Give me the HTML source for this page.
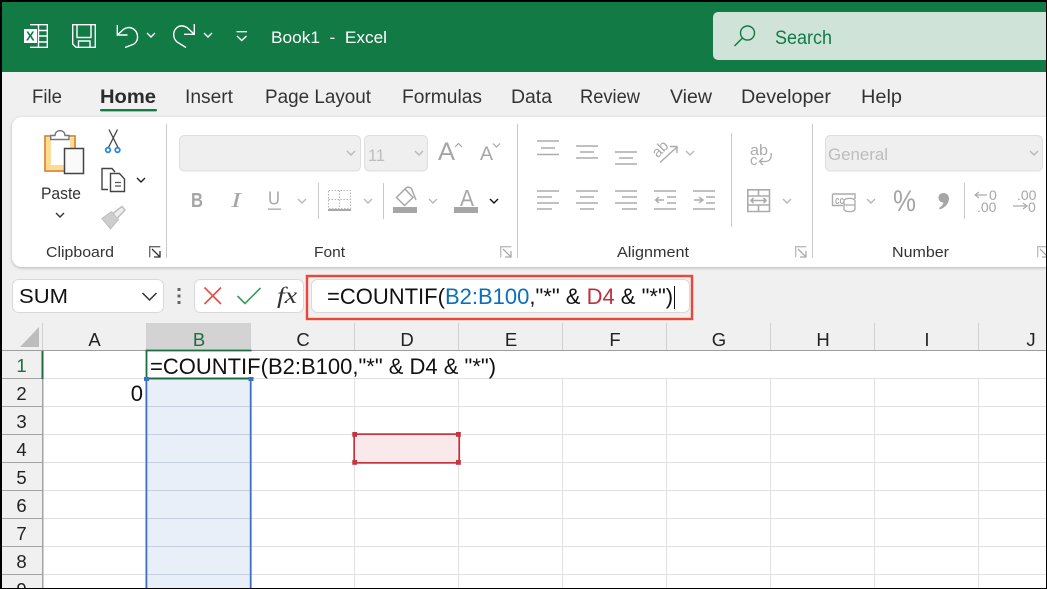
<!DOCTYPE html>
<html><head><meta charset="utf-8"><style>
html,body{margin:0;padding:0;background:#000;overflow:hidden}
svg{display:block;position:absolute;left:0;top:0}
text{font-family:"Liberation Sans",sans-serif;white-space:pre}
</style></head><body>
<svg width="1047" height="589" viewBox="0 0 1047 589" xmlns="http://www.w3.org/2000/svg">
<defs>
<filter id="sh" x="-5%" y="-10%" width="110%" height="120%"><feDropShadow dx="0" dy="1" stdDeviation="1.5" flood-color="#000" flood-opacity=".25"/></filter>
<path id="ch" d="M-4 -2 L0 2 L4 -2" fill="none" stroke-width="1.4"/>
<g id="lau" fill="none" stroke-width="1.3"><path d="M0.7 11.3V0.7H11.3" stroke="#666"/><path d="M3 3L10.5 10.5M5 11H11V5" stroke="#333"/></g>
<g id="laug" fill="none" stroke-width="1.3"><path d="M0.7 11.3V0.7H11.3" stroke="#bbb"/><path d="M3 3L10.5 10.5M5 11H11V5" stroke="#aaa"/></g>
</defs>
<rect width="1047" height="589" fill="#000"/>
<rect x="2" y="2" width="1044" height="586" fill="#f0f0f0"/>
<rect x="2" y="2" width="1044" height="70" fill="#117a45"/>

<!-- title icons -->
<g fill="none" stroke="#fff" stroke-width="1.4">
<path d="M30 24.7H47.3V47.3H30M38.5 24.7V47.3M38 30.500H47.3M38 36H47.3M38 42H47.3"/>
<rect x="24" y="29" width="13" height="14" fill="#fff" stroke="none"/>
<path d="M72.7 24.7H95.3V47.3H76L72.7 44ZM77 25V37.500H91V25M78.500 47V41H90V47"/>
<path d="M117.300 25V35H127.500"/>
<path d="M117.300 35L124 29C131 25 138 30 137.500 38C137.300 41 136 42.500 134 44L125 47.500"/>
<path d="M194.300 24V34.300H184"/>
<path d="M194.300 34.300L187 27.500C179 23 173 29 173.800 36C174 39 175.500 40.500 177 42L186 47.500"/>
<path d="M236.5 31.7H247" stroke-width="1.3"/>
<path d="M237 36L241.7 40.5L246.5 36" stroke-width="1.4"/>
</g>
<text x="26" y="40.500" font-size="13" font-weight="bold" fill="#117a45" textLength="8.500" lengthAdjust="spacingAndGlyphs">X</text>
<use href="#ch" x="151" y="35" stroke="#fff"/>
<use href="#ch" x="208" y="35" stroke="#fff"/>
<text x="271" y="43" font-size="17" fill="#fff" textLength="116" lengthAdjust="spacingAndGlyphs">Book1  -  Excel</text>

<!-- search -->
<rect x="713" y="12" width="340" height="48" rx="5" fill="#cfe3d8"/>
<circle cx="747.5" cy="33" r="7" fill="none" stroke="#117a45" stroke-width="1.4"/>
<path d="M742.5 38L734.5 46" stroke="#117a45" stroke-width="1.5" fill="none"/>
<text x="775" y="44" font-size="19" fill="#117a45" textLength="57" lengthAdjust="spacingAndGlyphs">Search</text>

<!-- tabs -->
<g font-size="19.5" fill="#333">
<text x="32" y="103" textLength="30" lengthAdjust="spacingAndGlyphs">File</text>
<text x="100" y="103" font-weight="bold" fill="#2c2c2c" textLength="56" lengthAdjust="spacingAndGlyphs">Home</text>
<text x="185" y="103" textLength="48" lengthAdjust="spacingAndGlyphs">Insert</text>
<text x="265" y="103" textLength="106" lengthAdjust="spacingAndGlyphs">Page Layout</text>
<text x="402" y="103" textLength="80" lengthAdjust="spacingAndGlyphs">Formulas</text>
<text x="511" y="103" textLength="41" lengthAdjust="spacingAndGlyphs">Data</text>
<text x="580" y="103" textLength="60" lengthAdjust="spacingAndGlyphs">Review</text>
<text x="670" y="103" textLength="42" lengthAdjust="spacingAndGlyphs">View</text>
<text x="741" y="103" textLength="90" lengthAdjust="spacingAndGlyphs">Developer</text>
<text x="861" y="103" textLength="41" lengthAdjust="spacingAndGlyphs">Help</text>
</g>
<rect x="100" y="109" width="57" height="2.4" rx="1.2" fill="#117a45"/>

<!-- ribbon -->
<rect x="12" y="117" width="1050" height="150" rx="10" fill="#fff" filter="url(#sh)"/>
<g fill="#c9c9c9"><rect x="166" y="124" width="1" height="134"/><rect x="517" y="124" width="1" height="134"/><rect x="812" y="124" width="1" height="134"/><rect x="731" y="133" width="1" height="94"/><rect x="318" y="183" width="1" height="36"/><rect x="383" y="183" width="1" height="36"/><rect x="964" y="183" width="1" height="36"/></g>

<!-- paste -->
<rect x="45" y="136" width="30" height="35" fill="#fff" stroke="#dd7a1c" stroke-width="1.6"/>
<path d="M46 165H64V170H46ZM46 137H51V165H46ZM70 138H74V148H70Z" fill="#fbdc95"/>
<path d="M50.7 139.5V135.5H55C55 129 65 129 65 135.5H69V139.5Z" fill="#fff" stroke="#777" stroke-width="1.4"/>
<rect x="64.5" y="148.5" width="19" height="25" fill="#fafafa" stroke="#444" stroke-width="1.5"/>
<text x="41" y="199" font-size="17" fill="#333" textLength="40" lengthAdjust="spacingAndGlyphs">Paste</text>
<use href="#ch" x="60" y="215" stroke="#333"/>
<path d="M109 129.500L118 147.500M117.500 129.500L108.500 147.500" stroke="#444" stroke-width="1.300" fill="none"/>
<circle cx="108" cy="150" r="2.300" fill="none" stroke="#2b88d8" stroke-width="1.800"/>
<circle cx="117.500" cy="150" r="2.300" fill="none" stroke="#2b88d8" stroke-width="1.800"/>
<path d="M108 189.500H102V168.500H112L115 172" fill="none" stroke="#444" stroke-width="1.400"/>
<path d="M110.500 191.500V173.500H119.500L124.500 179V191.500Z" fill="#fff" stroke="#444" stroke-width="1.400"/>
<path d="M115 182.500H121M115 186H121" stroke="#555" stroke-width="1.200"/>
<use href="#ch" x="141" y="180" stroke="#222"/>
<path d="M102 218.500L111.500 211.500L118.500 219.500L110.500 229Z" fill="#cdcdcd" stroke="#bdbdbd"/>
<path d="M113.500 213L122 206.500L125 210L117.500 218" fill="#eee" stroke="#bdbdbd" stroke-width="1.500"/>
<text x="46" y="257" font-size="15" fill="#333" textLength="68" lengthAdjust="spacingAndGlyphs">Clipboard</text>
<use href="#lau" x="149" y="246"/>

<!-- font group -->
<g fill="#efefef" stroke="#dedede"><rect x="179.500" y="135.500" width="181" height="35.500" rx="5"/><rect x="364.500" y="135.500" width="63" height="35.500" rx="5"/><rect x="825.500" y="135.500" width="217" height="35.500" rx="5"/></g>
<g stroke="#b8b8b8">
<use href="#ch" x="351" y="153"/><use href="#ch" x="419" y="153"/><use href="#ch" x="302" y="201"/><use href="#ch" x="368" y="201"/><use href="#ch" x="433" y="201"/><use href="#ch" x="690" y="153"/><use href="#ch" x="787" y="201"/><use href="#ch" x="871" y="201"/><use href="#ch" x="1034" y="153"/>
</g>
<use href="#ch" x="494" y="201" stroke="#111"/>
<text x="368" y="161" font-size="17" fill="#bdbdbd" textLength="17" lengthAdjust="spacingAndGlyphs">11</text>
<text x="828" y="160" font-size="17" fill="#bdbdbd" textLength="60" lengthAdjust="spacingAndGlyphs">General</text>
<g fill="#a6a6a6">
<text x="438" y="160" font-size="25" textLength="17" lengthAdjust="spacingAndGlyphs">A</text>
<text x="480" y="160" font-size="19" textLength="13" lengthAdjust="spacingAndGlyphs">A</text>
<text x="191" y="207" font-size="20" font-weight="bold" textLength="12" lengthAdjust="spacingAndGlyphs">B</text>
<text x="231" y="207" font-size="21" font-style="italic" textLength="10" lengthAdjust="spacingAndGlyphs" style="font-family:'Liberation Serif',serif">I</text>
<text x="268" y="204.500" font-size="18" textLength="12" lengthAdjust="spacingAndGlyphs">U</text>
<text x="460" y="206" font-size="23" textLength="14" lengthAdjust="spacingAndGlyphs">A</text>
<rect x="268" y="208.500" width="13" height="1.300"/>
<rect x="393" y="207" width="24" height="6"/>
<rect x="454" y="207" width="24" height="6"/>
</g>
<path d="M455 147L458.500 143.500L462 147M493 143.500L496.500 147L500 143.500" fill="none" stroke="#a6a6a6" stroke-width="1.200"/>
<path d="M328.500 190.500H350.500V208.500H328.500ZM339.500 190.500V208.500M328.500 199.500H350.500" fill="none" stroke="#b8b8b8" stroke-width="1.100" stroke-dasharray="1.500 1.500"/>
<rect x="328" y="209" width="23" height="2" fill="#a8a8a8"/>
<path d="M396.500 197.500L405 189L413 197.500L404.500 205.500Z" fill="#fff" stroke="#a8a8a8" stroke-width="1.500"/>
<path d="M405 189C407 186 411 187 412 190M412 190L416 200" fill="none" stroke="#a8a8a8" stroke-width="1.500"/>
<text x="314" y="257" font-size="15" fill="#333" textLength="31" lengthAdjust="spacingAndGlyphs">Font</text>
<use href="#laug" x="500" y="246"/>

<!-- alignment -->
<g stroke="#ababab" stroke-width="1.400" fill="none">
<path d="M537 141H559M541 148H555M537 154.500H559"/>
<path d="M576 146H598M580 152H594M576 158H598"/>
<path d="M615 152H637M619 158H633M615 164H637"/>
<path d="M537 191H559M537 197H552M537 203H559M537 209H552"/>
<path d="M576 191H598M580 197H594M576 203H598M580 209H594"/>
<path d="M615 191H637M622 197H637M615 203H637M622 209H637"/>
<path d="M654 191H676M667 197H676M667 203H676M654 209H676M664 200H656M659 197L655.500 200L659 203"/>
<path d="M693 191H715M706 197H715M706 203H715M693 209H715M694 200H702.500M699 197L703 200L699 203"/>
<path d="M660 162.500L677 147M670 146.500H677V153"/>
<path d="M747.800 189.800H769.500V211.500H747.800ZM747.800 196H769.500M747.800 205H769.500M758.500 189.800V196M758.500 205V211.500M751 200.500H766M753.500 198L751 200.500L753.500 203M763.500 198L766 200.500L763.500 203" stroke-width="1.600"/>
<path d="M771 153C772 159 769 161.500 765 161.500H759.500M763 158L759.500 161.500L763 165" stroke-width="1.300"/>
<path d="M832.500 194H855V199M832.500 194V205.500H843" stroke-width="1.400"/>
<path d="M844 201C844 197.500 855 197.500 855 201V209C855 212.500 844 212.500 844 209ZM844 205H855" stroke-width="1.300" fill="#fff"/>
<path d="M975 195H987M979 192L975 195L979 198M1013 206H1027M1023 203L1027 206L1023 209" stroke-width="1.200"/>
</g>
<text x="660" y="154" font-size="15" fill="#ababab" text-anchor="middle" transform="rotate(-45 660 149)">ab</text>
<text x="750" y="155" font-size="15" fill="#ababab" textLength="18" lengthAdjust="spacingAndGlyphs">ab</text>
<text x="750" y="165" font-size="15" fill="#ababab">c</text>
<text x="835" y="204" font-size="11" font-weight="bold" fill="#ababab" textLength="9" lengthAdjust="spacingAndGlyphs">cc</text>
<text x="617" y="257" font-size="15" fill="#333" textLength="72" lengthAdjust="spacingAndGlyphs">Alignment</text>
<use href="#laug" x="795" y="246"/>
<text x="892" y="257" font-size="15" fill="#333" textLength="57" lengthAdjust="spacingAndGlyphs">Number</text>
<use href="#laug" x="1037" y="246"/>
<g fill="#a6a6a6">
<text x="893" y="211" font-size="30" textLength="23" lengthAdjust="spacingAndGlyphs">%</text>
<path d="M938.500 197.500C938.500 194.500 941 193 943.500 193C947 193 949 195.500 949 198.500C949 203.500 945 207.500 940 209.500L939 208C941.500 206.500 943 204.500 943.500 202.500C940.500 202.500 938.500 200.500 938.500 197.500Z"/>
<text x="989" y="200" font-size="14">0</text>
<text x="977" y="212" font-size="14">.00</text>
<text x="1017" y="200" font-size="14">.00</text>
<text x="1028" y="212" font-size="14">0</text>
</g>

<!-- formula bar -->
<rect x="12.500" y="279.500" width="151" height="33" rx="6" fill="#fff" stroke="#d9d9d9"/>
<text x="19" y="303" font-size="20" fill="#111" textLength="49" lengthAdjust="spacingAndGlyphs">SUM</text>
<path d="M142.500 293L149.500 300L156.500 293" fill="none" stroke="#333" stroke-width="1.500"/>
<g fill="#666"><rect x="177.500" y="288" width="3" height="3"/><rect x="177.500" y="294.500" width="3" height="3"/><rect x="177.500" y="301" width="3" height="3"/></g>
<rect x="194.500" y="279.500" width="109" height="33" rx="6" fill="#fff" stroke="#d9d9d9"/>
<path d="M204.500 287.500L221 304M221 287.500L204.500 304" stroke="#e84c4c" stroke-width="1.600" fill="none"/>
<path d="M237.500 296L245 303.500L260.500 288" stroke="#3a9a5c" stroke-width="1.600" fill="none"/>
<text x="277" y="303" font-size="23" font-style="italic" style="font-family:'Liberation Serif',serif" fill="#333" textLength="20" lengthAdjust="spacingAndGlyphs">fx</text>
<rect x="311.500" y="279.500" width="378" height="33" rx="6" fill="#fff" stroke="#d9d9d9"/>
<text x="327" y="304" font-size="22" fill="#111">=COUNTIF(<tspan fill="#0b6fbd">B2:B100</tspan>,"*" &amp; <tspan fill="#c0303c">D4</tspan> &amp; "*")</text>
<rect x="674" y="286" width="1" height="23" fill="#111"/>
<rect x="307" y="276" width="385" height="43" fill="none" stroke="#ef4438" stroke-width="2.400"/>

<!-- grid -->
<rect x="43" y="351" width="1003" height="237" fill="#fff"/>
<g fill="#e1e1e1">
<rect x="146" y="378" width="900" height="1"/><rect x="43" y="378" width="103" height="1"/>
<rect x="43" y="406" width="1003" height="1"/><rect x="43" y="434" width="1003" height="1"/><rect x="43" y="462" width="1003" height="1"/><rect x="43" y="490" width="1003" height="1"/><rect x="43" y="518" width="1003" height="1"/><rect x="43" y="546" width="1003" height="1"/><rect x="43" y="574" width="1003" height="1"/>
<rect x="354" y="379" width="1" height="209"/><rect x="458" y="379" width="1" height="209"/><rect x="562" y="379" width="1" height="209"/><rect x="666" y="379" width="1" height="209"/><rect x="770" y="379" width="1" height="209"/><rect x="874" y="379" width="1" height="209"/><rect x="978" y="379" width="1" height="209"/>
</g>
<!-- col headers -->
<rect x="146" y="323" width="105" height="27" fill="#d3d3d3"/>
<path d="M39 327V347H20Z" fill="#bdbdbd"/>
<g fill="#d0d0d0"><rect x="42" y="323" width="1" height="27"/><rect x="146" y="323" width="1" height="27"/><rect x="250" y="323" width="1" height="27"/><rect x="354" y="323" width="1" height="27"/><rect x="458" y="323" width="1" height="27"/><rect x="562" y="323" width="1" height="27"/><rect x="666" y="323" width="1" height="27"/><rect x="770" y="323" width="1" height="27"/><rect x="874" y="323" width="1" height="27"/><rect x="978" y="323" width="1" height="27"/></g>
<rect x="2" y="350" width="1044" height="1" fill="#9e9e9e"/>
<g font-size="18.500" fill="#222" text-anchor="middle">
<text x="94.500" y="346">A</text><text x="199" y="346" fill="#1c6e42">B</text><text x="303" y="346">C</text><text x="407" y="346">D</text><text x="511" y="346">E</text><text x="615" y="346">F</text><text x="719" y="346">G</text><text x="823" y="346">H</text><text x="927" y="346">I</text><text x="1031" y="346">J</text>
</g>
<!-- row headers -->
<g fill="#a3a3a3"><rect x="2" y="378" width="41" height="1"/><rect x="2" y="406" width="41" height="1"/><rect x="2" y="434" width="41" height="1"/><rect x="2" y="462" width="41" height="1"/><rect x="2" y="490" width="41" height="1"/><rect x="2" y="518" width="41" height="1"/><rect x="2" y="546" width="41" height="1"/><rect x="2" y="574" width="41" height="1"/><rect x="42" y="351" width="1.500" height="237"/></g>
<rect x="41.500" y="351" width="2" height="28" fill="#1c6e42"/>
<g font-size="18.500" fill="#222" text-anchor="middle">
<text x="21.500" y="372" fill="#1c6e42">1</text><text x="21.500" y="400">2</text><text x="21.500" y="428">3</text><text x="21.500" y="456">4</text><text x="21.500" y="484">5</text><text x="21.500" y="512">6</text><text x="21.500" y="540">7</text><text x="21.500" y="568">8</text><text x="21.500" y="596">9</text>
</g>
<!-- selection B -->
<rect x="147" y="379" width="103" height="209" fill="#e8eff9"/>
<g fill="#c6d0de"><rect x="147" y="406" width="103" height="1"/><rect x="147" y="434" width="103" height="1"/><rect x="147" y="462" width="103" height="1"/><rect x="147" y="490" width="103" height="1"/><rect x="147" y="518" width="103" height="1"/><rect x="147" y="546" width="103" height="1"/><rect x="147" y="574" width="103" height="1"/></g>
<g fill="#3a70c6"><rect x="145.500" y="379" width="1.800" height="209"/><rect x="249.800" y="379" width="1.800" height="209"/></g>
<!-- active cell -->
<path d="M146.500 379V350.500H251.500" fill="none" stroke="#1c6e42" stroke-width="1.800"/>
<path d="M146 378.500H251" fill="none" stroke="#1c6e42" stroke-width="2"/>
<rect x="144" y="377" width="5" height="4" fill="#3a70c6"/><rect x="248.500" y="377" width="5" height="4" fill="#3a70c6"/>
<text x="150" y="374" font-size="22" fill="#111">=COUNTIF(B2:B100,"*" &amp; D4 &amp; "*")</text>
<text x="143" y="401" font-size="22" fill="#111" text-anchor="end">0</text>
<!-- D4 range -->
<rect x="355" y="435" width="104" height="27.500" fill="#f9e9ea"/>
<rect x="355.500" y="435.500" width="102.500" height="26" fill="none" stroke="#fff" stroke-width="1"/>
<rect x="354.200" y="434.200" width="105" height="28.600" fill="none" stroke="#c5343f" stroke-width="1.800"/>
<g fill="#c5343f"><rect x="352.300" y="432" width="4.800" height="4.800"/><rect x="456" y="432" width="4.800" height="4.800"/><rect x="352.300" y="460" width="4.800" height="4.800"/><rect x="456" y="460" width="4.800" height="4.800"/></g>
<!-- black edges -->
<rect x="0" y="0" width="1047" height="2" fill="#000"/><rect x="0" y="0" width="2" height="589" fill="#000"/><rect x="1046" y="0" width="1" height="589" fill="#000"/><rect x="0" y="588" width="1047" height="1" fill="#000"/>
</svg>
</body></html>
